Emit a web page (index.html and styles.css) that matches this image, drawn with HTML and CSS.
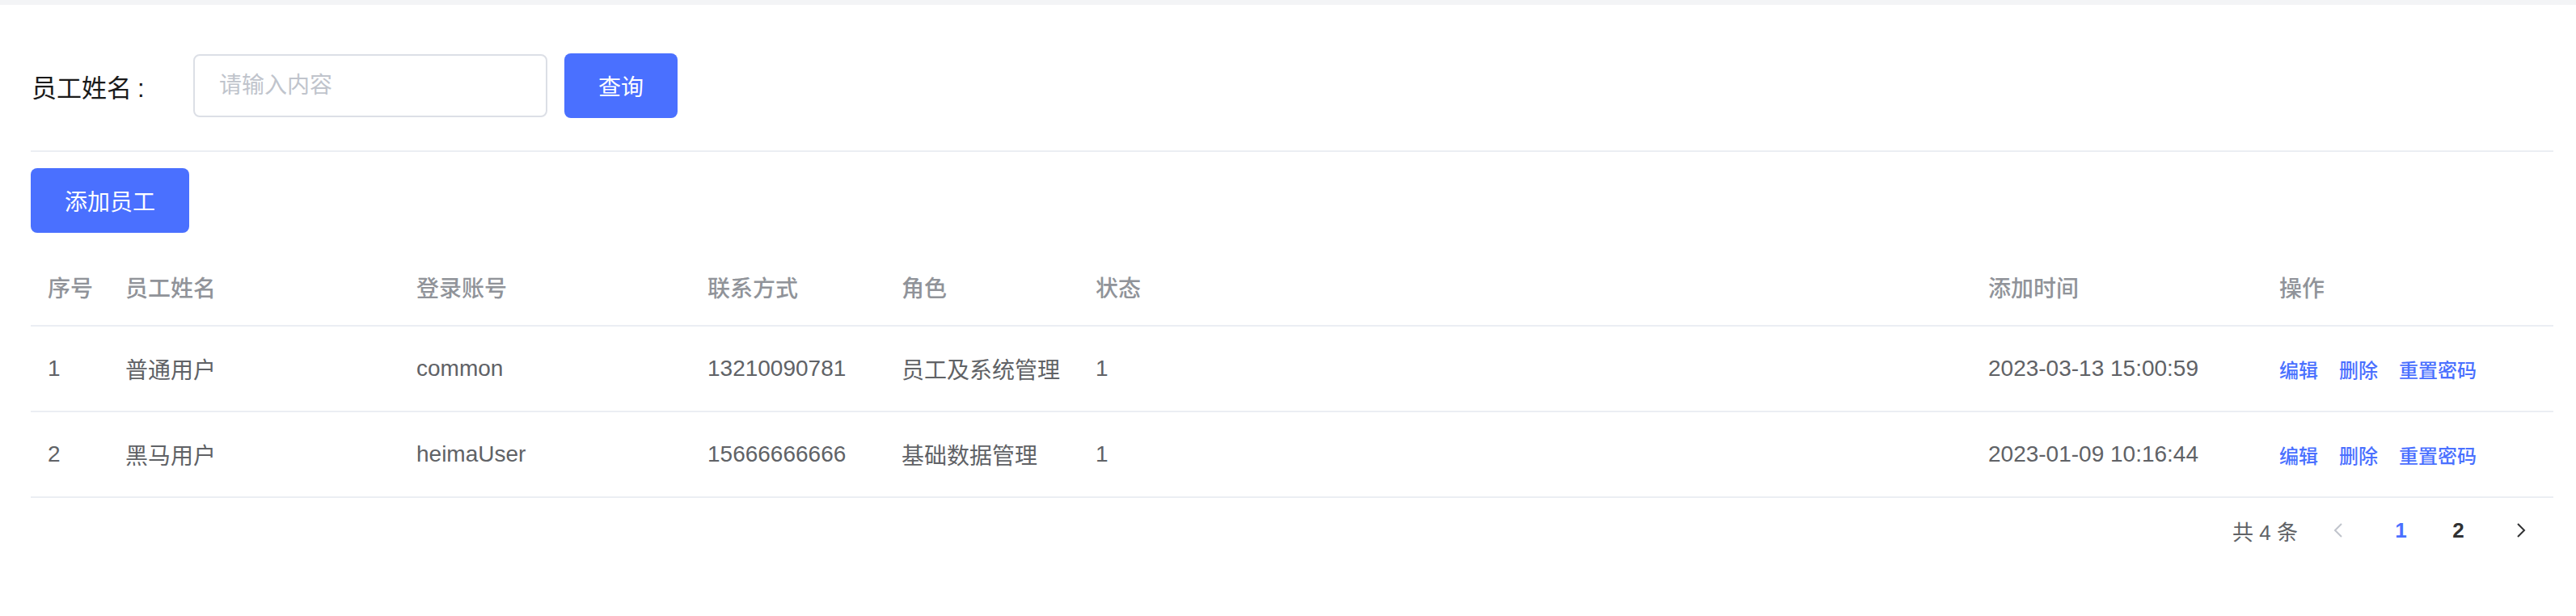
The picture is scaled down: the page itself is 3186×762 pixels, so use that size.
FILE: index.html
```html
<!DOCTYPE html>
<html lang="zh-CN">
<head>
<meta charset="utf-8">
<title>员工管理</title>
<link rel="stylesheet" href="styles.css">
</head>
<body>
<div class="topbar"></div>
<div class="page">
  <div class="search-row">
    <label class="search-label">员工姓名<span class="colon">:</span></label>
    <input class="search-input" type="text" placeholder="请输入内容">
    <button class="btn btn-query">查询</button>
  </div>
  <div class="divider"></div>
  <button class="btn btn-add">添加员工</button>

  <div class="table">
    <div class="row head">
      <div class="cell">序号</div>
      <div class="cell">员工姓名</div>
      <div class="cell">登录账号</div>
      <div class="cell">联系方式</div>
      <div class="cell">角色</div>
      <div class="cell">状态</div>
      <div class="cell">添加时间</div>
      <div class="cell">操作</div>
    </div>
    <div class="row">
      <div class="cell">1</div>
      <div class="cell">普通用户</div>
      <div class="cell">common</div>
      <div class="cell">13210090781</div>
      <div class="cell">员工及系统管理</div>
      <div class="cell">1</div>
      <div class="cell">2023-03-13 15:00:59</div>
      <div class="cell actions"><a>编辑</a><a>删除</a><a>重置密码</a></div>
    </div>
    <div class="row">
      <div class="cell">2</div>
      <div class="cell">黑马用户</div>
      <div class="cell">heimaUser</div>
      <div class="cell">15666666666</div>
      <div class="cell">基础数据管理</div>
      <div class="cell">1</div>
      <div class="cell">2023-01-09 10:16:44</div>
      <div class="cell actions"><a>编辑</a><a>删除</a><a>重置密码</a></div>
    </div>
  </div>

  <div class="pagination">
    <span class="total">共 4 条</span>
    <span class="pg-btn prev"><svg width="12" height="18" viewBox="0 0 12 18"><polyline points="10,1 2,9 10,17" fill="none" stroke="currentColor" stroke-width="2"/></svg></span>
    <span class="pg-num active">1</span>
    <span class="pg-num">2</span>
    <span class="pg-btn next"><svg width="12" height="18" viewBox="0 0 12 18"><polyline points="2,1 10,9 2,17" fill="none" stroke="currentColor" stroke-width="2"/></svg></span>
  </div>
</div>
</body>
</html>
```
FILE: styles.css
```css
* { box-sizing: border-box; }
body {
  margin: 0;
  background: #fff;
  font-family: "Liberation Sans", "Noto Sans CJK SC", sans-serif;
}
.topbar {
  height: 6px;
  background: #f3f4f6;
}
.page {
  padding: 0 28px 0 38px;
}
.search-row {
  display: flex;
  align-items: center;
  margin-top: 60px;
  height: 80px;
}
.search-label {
  width: 201px;
  padding-left: 1px;
  font-size: 31px;
  color: #1a1a1a;
}
.colon {
  margin-left: 7px;
}
.search-input {
  width: 438px;
  height: 78px;
  border: 2px solid #dcdfe6;
  border-radius: 8px;
  padding: 0 30px;
  font-size: 28px;
  font-family: inherit;
  color: #606266;
  outline: none;
}
.search-input::placeholder { color: #c0c4cc; }
.btn {
  height: 80px;
  border: none;
  border-radius: 8px;
  background: #4a70ff;
  color: #fff;
  font-size: 28px;
  font-family: inherit;
  padding: 0;
  display: block;
}
.btn-query {
  width: 140px;
  margin-left: 21px;
}
.divider {
  margin-top: 40px;
  height: 2px;
  background: #ebeef3;
}
.btn-add {
  width: 196px;
  margin-top: 20px;
}
.table {
  margin-top: 20px;
}
.row {
  display: grid;
  grid-template-columns: 96px 360px 360px 240px 240px 1fr 360px 360px;
  height: 106px;
  border-bottom: 2px solid #ebeef3;
  align-items: center;
  font-size: 28px;
  color: #606266;
}
.row.head {
  height: 96px;
  color: #909399;
  font-weight: 500;
}
.cell {
  padding: 0 20px 0 21px;
  white-space: nowrap;
}
.actions {
  display: flex;
  gap: 26px;
  font-size: 24px;
  color: #4a70ff;
  font-weight: 500;
}
.pagination {
  display: flex;
  justify-content: flex-end;
  align-items: center;
  height: 56px;
  margin-top: 12px;
  padding-right: 10px;
  font-size: 26px;
}
.total {
  color: #606266;
  margin-right: 20px;
}
.pg-btn {
  width: 72px;
  height: 56px;
  display: flex;
  align-items: center;
  justify-content: center;
}
.prev { padding-right: 12px; color: #c0c4cc; }
.next { padding-left: 12px; color: #303133; }
.pg-num {
  width: 71px;
  height: 56px;
  line-height: 56px;
  text-align: center;
  font-weight: 700;
  color: #303133;
}
.pg-num.active { color: #4a70ff; }
```
